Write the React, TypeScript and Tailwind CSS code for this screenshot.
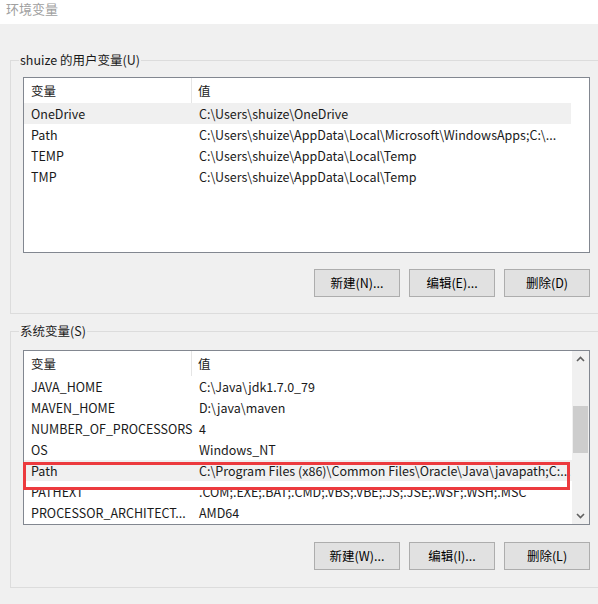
import React from "react";

const font = { fontFamily: '"Noto Sans CJK SC", "Noto Sans", sans-serif' };

type Row = [string, string];

function ListBox({ rows, selected, scroll, height }: { rows: Row[]; selected: number; scroll?: boolean; height: string }) {
  return (
    <div className={`flex border border-[#828790] bg-white ${height} ml-[12px] w-[567px]`}>
      <div className="flex-1 flex flex-col min-w-0">
        <div className="flex h-[25px] items-center shrink-0">
          <div className="w-[168px] pl-[7px] h-full flex items-center border-r border-[#e5e5e5]">变量</div>
          <div className="pl-[6px]">值</div>
        </div>
        {rows.map((r, i) => (
          <div key={i} className={`flex h-[21px] items-center shrink-0 ${i === selected ? "bg-[#f0f0f0]" : ""} ${scroll ? "" : "mr-[18px]"}`}>
            <div className="w-[169px] shrink-0 pl-[7px] whitespace-nowrap">{r[0]}</div>
            <div className="pl-[6px] whitespace-nowrap">{r[1]}</div>
          </div>
        ))}
      </div>
      {scroll && (
        <div className="w-[17px] bg-[#f0f0f0] flex flex-col items-center shrink-0">
          <svg width="17" height="17" viewBox="0 0 17 17" className="shrink-0">
            <path d="M5 10 L8.5 6.5 L12 10" fill="none" stroke="#606060" strokeWidth="1.6" />
          </svg>
          <div className="h-[38px] shrink-0" />
          <div className="w-[15px] h-[47px] bg-[#cdcdcd] shrink-0" />
          <div className="flex-1" />
          <svg width="17" height="17" viewBox="0 0 17 17" className="shrink-0">
            <path d="M5 7 L8.5 10.5 L12 7" fill="none" stroke="#606060" strokeWidth="1.6" />
          </svg>
        </div>
      )}
    </div>
  );
}

function Btn({ label }: { label: string }) {
  return (
    <div className="w-[86px] h-[28px] border border-[#adadad] bg-[#e1e1e1] flex items-center justify-center text-[12.5px] text-black">
      {label}
    </div>
  );
}

export default function App() {
  const userRows: Row[] = [
    ["OneDrive", "C:\\Users\\shuize\\OneDrive"],
    ["Path", "C:\\Users\\shuize\\AppData\\Local\\Microsoft\\WindowsApps;C:\\..."],
    ["TEMP", "C:\\Users\\shuize\\AppData\\Local\\Temp"],
    ["TMP", "C:\\Users\\shuize\\AppData\\Local\\Temp"],
  ];
  const sysRows: Row[] = [
    ["JAVA_HOME", "C:\\Java\\jdk1.7.0_79"],
    ["MAVEN_HOME", "D:\\java\\maven"],
    ["NUMBER_OF_PROCESSORS", "4"],
    ["OS", "Windows_NT"],
    ["Path", "C:\\Program Files (x86)\\Common Files\\Oracle\\Java\\javapath;C:..."],
    ["PATHEXT", ".COM;.EXE;.BAT;.CMD;.VBS;.VBE;.JS;.JSE;.WSF;.WSH;.MSC"],
    ["PROCESSOR_ARCHITECT...", "AMD64"],
  ];
  return (
    <div style={font} className="w-[598px] h-[604px] bg-[#f0f0f0] overflow-hidden relative text-[12.5px] text-[#1a1a1a] leading-[16px]">
      <div className="h-[24px] bg-white pl-[6px] pt-[1px] text-[#a0a0a0] text-[13px]">环境变量</div>
      <div className="pl-[10px] pt-[28px]">
        <fieldset className="border border-[#dcdcdc] w-[600px] h-[262px] pb-[16px]">
          <legend className="ml-[8px] px-[1px]">shuize 的用户变量(U)</legend>
          <div className="mt-[9px]">
            <ListBox rows={userRows} selected={0} height="h-[176px]" />
          </div>
          <div className="flex gap-[9px] ml-[303px] mt-[16px]">
            <Btn label="新建(N)..." />
            <Btn label="编辑(E)..." />
            <Btn label="删除(D)" />
          </div>
        </fieldset>
        <fieldset className="border border-[#dcdcdc] w-[600px] h-[265px] mt-[9px]">
          <legend className="ml-[8px] px-[1px]">系统变量(S)</legend>
          <div className="mt-[11px] relative">
            <ListBox rows={sysRows} selected={4} scroll height="h-[175px]" />
            <div className="absolute left-[12px] top-[112px] w-[547px] h-[28px] border-[3px] border-[#ec3a3e]" />
          </div>
          <div className="flex gap-[9px] ml-[303px] mt-[17px]">
            <Btn label="新建(W)..." />
            <Btn label="编辑(I)..." />
            <Btn label="删除(L)" />
          </div>
        </fieldset>
      </div>
    </div>
  );
}
